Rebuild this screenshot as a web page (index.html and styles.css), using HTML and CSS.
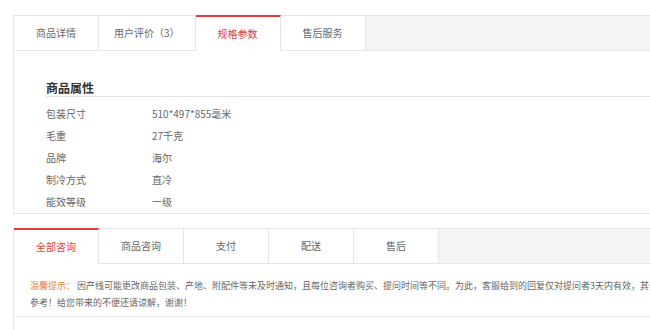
FILE: index.html
```html
<!DOCTYPE html>
<html lang="zh-CN">
<head>
<meta charset="utf-8">
<title>规格参数</title>
<link rel="stylesheet" href="styles.css">
</head>
<body>
<div class="page">
  <section class="block">
    <nav class="tabbar">
      <div class="tab">商品详情</div>
      <div class="tab">用户评价（3）</div>
      <div class="tab active">规格参数</div>
      <div class="tab">售后服务</div>
    </nav>
    <div class="panel">
      <h3 class="attr-title">商品属性</h3>
      <dl class="attrs">
        <div class="attr"><dt>包装尺寸</dt><dd>510*497*855毫米</dd></div>
        <div class="attr"><dt>毛重</dt><dd>27千克</dd></div>
        <div class="attr"><dt>品牌</dt><dd>海尔</dd></div>
        <div class="attr"><dt>制冷方式</dt><dd>直冷</dd></div>
        <div class="attr"><dt>能效等级</dt><dd>一级</dd></div>
      </dl>
    </div>
  </section>

  <section class="block consult">
    <nav class="tabbar">
      <div class="tab active">全部咨询</div>
      <div class="tab">商品咨询</div>
      <div class="tab">支付</div>
      <div class="tab">配送</div>
      <div class="tab">售后</div>
    </nav>
    <div class="consult-body">
      <p class="tip"><span class="tip-label">温馨提示：</span> 因产线可能更改商品包装、产地、附配件等未及时通知，且每位咨询者购买、提问时间等不同。为此，客服给到的回复仅对提问者3天内有效，其他网友仅供<br>参考！给您带来的不便还请谅解，谢谢！</p>
      <div class="consult-list"></div>
    </div>
  </section>
</div>
</body>
</html>
```

FILE: styles.css
```css
html, body {
  margin: 0;
  padding: 0;
  background: #fff;
  overflow: hidden;
}

body {
  font-family: "Noto Sans CJK SC", "Microsoft YaHei", sans-serif;
  color: #666;
  font-size: 10px;
}

.page {
  width: 1000px;
  padding: 15px 0 0 13px;
}

.tabbar {
  display: flex;
  height: 34px;
  background: #f5f5f5;
  border: 1px solid #e6e6e6;
  border-right: none;
}

.tab {
  box-sizing: border-box;
  min-width: 85px;
  padding: 0 15px;
  border-right: 1px solid #e6e6e6;
  background: #fff;
  line-height: 34px;
  text-align: center;
  color: #666;
  font-size: 10px;
}

.tab.active {
  margin: -1px 0 -1px;
  height: 36px;
  border-top: 2px solid #e4393c;
  line-height: 33px;
  color: #e4393c;
}

.panel {
  border-left: 1px solid #e6e6e6;
  border-bottom: 1px solid #e6e6e6;
  padding: 29px 0 0 32px;
}

.attr-title {
  margin: 0 0 6px;
  font-size: 12px;
  font-weight: bold;
  color: #333;
  line-height: 16px;
  border-bottom: 1px solid #e3e3e3;
}

.attrs {
  margin: 0;
}

.attr {
  display: flex;
  height: 22px;
  line-height: 22px;
}

.attr dt {
  width: 106px;
  color: #666;
}

.attr dd {
  margin: 0;
  color: #666;
}

.consult {
  margin-top: 14px;
}

.consult-body {
  border-left: 1px solid #e6e6e6;
}

.tip {
  margin: 0;
  padding: 13px 0 5px 16px;
  font-size: 9px;
  line-height: 17px;
  color: #666;
  border-bottom: 1px solid #e6e6e6;
  white-space: nowrap;
}

.tip-label {
  color: #f08040;
}

.consult-list {
  height: 40px;
}
```
